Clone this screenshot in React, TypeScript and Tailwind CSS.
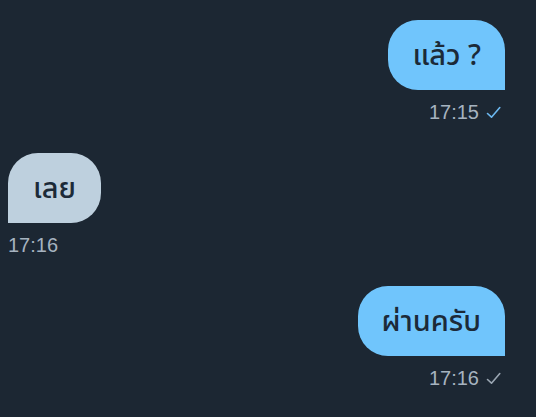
import React from "react";

type Msg = {
  text: string;
  time: string;
  out: boolean;
  read?: boolean;
};

const messages: Msg[] = [
  { text: "แล้ว ?", time: "17:15", out: true, read: true },
  { text: "เลย", time: "17:16", out: false },
  { text: "ผ่านครับ", time: "17:16", out: true, read: false },
];

function Check({ blue }: { blue: boolean }) {
  return (
    <svg width="15" height="13" viewBox="0 0 15 13" fill="none" className="ml-[7px]">
      <path
        d="M1.5 7.5 L5.5 11.2 L13.8 1.5"
        stroke={blue ? "#6cb8f0" : "#9aa6b2"}
        strokeWidth="1.6"
        strokeLinecap="round"
        strokeLinejoin="round"
      />
    </svg>
  );
}

function Bubble({ m }: { m: Msg }) {
  return (
    <div className={`flex flex-col ${m.out ? "items-end" : "items-start"}`}>
      <div
        className={
          m.out
            ? "h-[70px] flex items-center px-[24px] rounded-[30px] rounded-br-none bg-[#70c5fc] text-[#1c2a38]"
            : "h-[70px] flex items-center px-[25px] rounded-[30px] rounded-bl-none bg-[#bed0de] text-[#1c2a38]"
        }
        style={{ fontFamily: '"Noto Sans Thai", "Noto Sans", sans-serif' }}
      >
        <span className="text-[29px] font-medium leading-none pt-[3px]">{m.text}</span>
      </div>
      <div
        className={`flex items-center h-[24px] mt-[10px] text-[20px] leading-none text-[#a6b3c0] ${
          m.out ? "mr-[4px]" : ""
        }`}
        style={{ fontFamily: '"Liberation Sans", Arial, sans-serif' }}
      >
        <span>{m.time}</span>
        {m.out && <Check blue={!!m.read} />}
      </div>
    </div>
  );
}

export default function App() {
  return (
    <div className="w-[536px] h-[417px] bg-[#1c2733] overflow-hidden">
      <div className="flex flex-col gap-[29px] pt-[20px] pl-[8px] pr-[31px]">
        {messages.map((m, i) => (
          <Bubble key={i} m={m} />
        ))}
      </div>
    </div>
  );
}
